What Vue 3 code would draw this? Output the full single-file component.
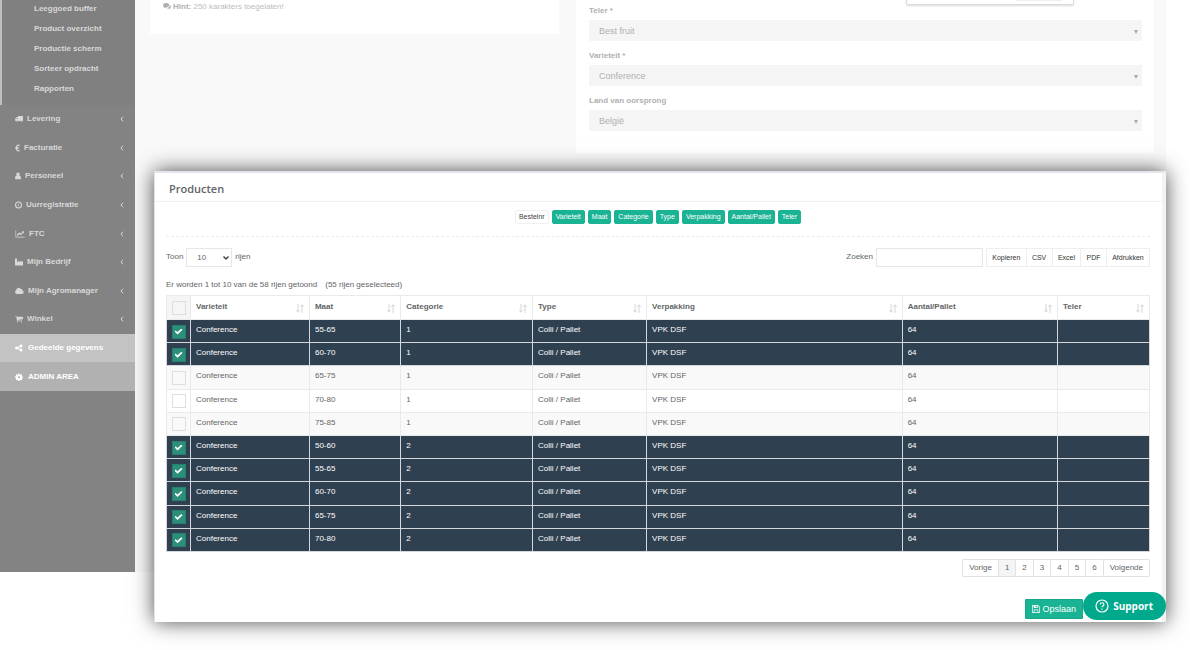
<script setup>
import { ref } from 'vue'

const subItems = ['Leeggoed buffer', 'Product overzicht', 'Productie scherm', 'Sorteer opdracht', 'Rapporten']

const menu = [
  { label: 'Levering', icon: 'truck', w: 8 },
  { label: 'Facturatie', icon: 'euro', w: 5 },
  { label: 'Personeel', icon: 'user', w: 6 },
  { label: 'Uurregistratie', icon: 'clock', w: 7 },
  { label: 'FTC', icon: 'chart', w: 10 },
  { label: 'Mijn Bedrijf', icon: 'industry', w: 8 },
  { label: 'Mijn Agromanager', icon: 'cloud', w: 9 },
  { label: 'Winkel', icon: 'cart', w: 8 },
  { label: 'Gedeelde gegevens', icon: 'share', w: 8, tone: 'shared' },
  { label: 'ADMIN AREA', icon: 'gear', w: 8, tone: 'admin' },
]

const icons = {
  truck: { box: '0 0 18 16', d: 'M7 1h11v11.500h-1.300a2.200 2.200 0 0 1-4.400 0H7.700a2.200 2.200 0 0 1-4.400 0H.500V7.500L3.500 3.500H7zM5.700 5.300H4.300L2.500 7.700h3.200zM5.500 11.200a1.300 1.300 0 1 0 .010 0zM14.500 11.200a1.300 1.300 0 1 0 .010 0z' },
  euro: { box: '0 0 10 16', d: 'M9.600 1.700l-.500 2.400C7.200 3.200 5 3.600 4.300 6h4l-.300 1.400H4v1.200h3.700L7.400 10H4.300c.700 2.400 2.900 2.900 4.900 1.900l.500 2.300C6 15.800 2.500 14.300 1.700 10H.300V8.600h1.200V7.400H.300V6h1.400C2.500 1.800 6.200.200 9.600 1.700z' },
  user: { box: '0 0 12 14', d: 'M6 0a3.300 3.300 0 0 1 2.300 5.800C10.800 6.200 12 8.500 12 11.500c0 1.200-.800 2.200-2 2.200H2c-1.200 0-2-1-2-2.200 0-3 1.200-5.300 3.700-5.700A3.300 3.300 0 0 1 6 0z' },
  clock: { box: '0 0 14 14', d: 'M7 0a7 7 0 1 1 0 14A7 7 0 0 1 7 0zm0 2.100a4.900 4.900 0 1 0 0 9.800 4.900 4.900 0 0 0 0-9.800zM6.500 3.800H8v4.400H4.500V6.900h2z' },
  chart: { box: '0 0 18 16', d: 'M0 1h1.300v12.700H18V15H0zM16.900 2.600v4.200l-1.300-1.200-5 5-2.500-2.500-3.800 3.800-1.800-1.800 5.600-5.600 2.500 2.500L14 3.900l-1.300-1.300z' },
  industry: { box: '0 0 16 16', d: 'M0 1h4v7.500L8.500 5v3.500L13 5v3.500L16 6v9H0z' },
  cloud: { box: '0 0 18 16', d: 'M4 14a4 4 0 0 1-1.700-7.500A4.800 4.800 0 0 1 11.300 4.200 2.800 2.800 0 0 1 14.800 7 3.600 3.600 0 0 1 14.300 14z' },
  cart: { box: '0 0 16 16', d: 'M0 2h3.100l.400 1.400H16v5.300L5.200 10l.200 1H14v1.200H4.200L2.300 3.200H0zM5.500 12.600a1.300 1.300 0 1 1-.010 0zM13 12.600a1.300 1.300 0 1 1-.010 0z' },
  share: { box: '0 0 16 16', d: 'M12 1.200a2.900 2.900 0 1 1-2 5L6.200 8l3.800 1.900a2.900 2.900 0 1 1-.900 2L5.400 10a3 3 0 1 1 0-4l3.700-1.900A2.900 2.900 0 0 1 12 1.200z' },
  gear: { box: '0 0 16 16', d: 'M6.700 1h2.600l.400 2 1.300.500L12.700 2.400l1.900 1.900L13.500 6l.500 1.200 2 .300v2.200l-2 .400-.500 1.200 1.100 1.700-1.900 1.800L11 13.700l-1.300.500-.400 1.800H6.700l-.400-1.900-1.300-.500-1.700 1.100-1.800-1.900L2.600 11 2 9.800 0 9.400V7.100l2-.400L2.600 5.500 1.500 4 3.300 2.200 5 3.400 6.300 3zM8 6.300a2.200 2.200 0 1 0 0 4.400 2.200 2.200 0 0 0 0-4.400z' },
}

const fields = [
  { id: 'teler', label: 'Teler *', value: 'Best fruit' },
  { id: 'varieteit', label: 'Varieteit *', value: 'Conference' },
  { id: 'land', label: 'Land van oorsprong', value: 'België' },
]

const toggles = ['Bestelnr', 'Varieteit', 'Maat', 'Categorie', 'Type', 'Verpakking', 'Aantal/Pallet', 'Teler']
const exportsList = ['Kopieren', 'CSV', 'Excel', 'PDF', 'Afdrukken']
const columns = ['Varieteit', 'Maat', 'Categorie', 'Type', 'Verpakking', 'Aantal/Pallet', 'Teler']
const pages = ['Vorige', '1', '2', '3', '4', '5', '6', 'Volgende']

const rows = ref(
  [
    ['55-65', 1, true], ['60-70', 1, true], ['65-75', 1, false], ['70-80', 1, false], ['75-85', 1, false],
    ['50-60', 2, true], ['55-65', 2, true], ['60-70', 2, true], ['65-75', 2, true], ['70-80', 2, true],
  ].map(([size, cat, selected]) => ({
    selected,
    cells: ['Conference', size, cat, 'Colli / Pallet', 'VPK DSF', '64', ''],
  }))
)
const allSelected = ref(false)
const search = ref('')
</script>

<template>
  <div class="page">
    <div class="backdrop">
      <nav class="sidebar">
        <div class="submenu">
          <a v-for="s in subItems" :key="s" href="#">{{ s }}</a>
        </div>
        <div class="menu">
          <a v-for="m in menu" :key="m.label" href="#" :class="m.tone">
            <svg :style="{ width: m.w + 'px' }" :viewBox="icons[m.icon].box" aria-hidden="true">
              <path :d="icons[m.icon].d" fill-rule="evenodd" />
            </svg>
            <span>{{ m.label }}</span>
            <svg v-if="!m.tone" class="caret" viewBox="0 0 4 6" aria-hidden="true"><path d="M3 .700L1 3l2 2.300" /></svg>
          </a>
        </div>
      </nav>
      <div class="content">
        <section class="card hint-card">
          <p>
            <svg viewBox="0 0 18 16" aria-hidden="true"><path d="M7 1.500c3.900 0 7 2.100 7 4.900s-3.100 4.800-7 4.800l-1.500-.100c-1.200 1-2.700 1.500-4.400 1.700.700-.800 1.300-1.500 1.500-2.600C1 9.300 0 7.900 0 6.400 0 3.600 3.100 1.500 7 1.500zM15.200 5.500c1.700.900 2.800 2.200 2.800 3.800 0 1.500-1 2.800-2.500 3.700.200.900.700 1.500 1.400 2.300-1.600-.200-3-.700-4.200-1.700-1.900.300-3.900 0-5.500-.900 4.800-.100 8.900-2.900 8-7.200z" /></svg>
            <b>Hint:</b> 250 karakters toegelaten!
          </p>
        </section>
        <section class="card form-card">
          <div v-for="f in fields" :key="f.id" class="field">
            <label :for="f.id">{{ f.label }}</label>
            <div class="select-wrap">
              <select :id="f.id" disabled><option>{{ f.value }}</option></select>
              <svg viewBox="0 0 4 4" aria-hidden="true"><path d="M0 0h4L2 4z" /></svg>
            </div>
          </div>
          <div class="popup"><i></i></div>
        </section>
      </div>
    </div>

    <section class="panel">
      <h5>Producten</h5>
      <div class="body">
        <div class="toggles">
          <button v-for="(t, i) in toggles" :key="t" type="button" :class="{ off: i === 0 }">{{ t }}</button>
        </div>
        <div class="toolbar">
          <label for="len">Toon</label>
          <div class="length">
            <select id="len"><option>10</option></select>
            <svg viewBox="0 0 8 6" aria-hidden="true"><path d="M1.500 1.500L4 4l2.500-2.500" /></svg>
          </div>
          <span>rijen</span>
          <label class="search-label" for="search">Zoeken</label>
          <input id="search" v-model="search" type="text">
          <div class="exports">
            <button v-for="e in exportsList" :key="e" type="button">{{ e }}</button>
          </div>
        </div>
        <p class="info"><span>Er worden 1 tot 10 van de 58 rijen getoond</span><span>(55 rijen geselecteed)</span></p>
        <table>
          <colgroup>
            <col class="c-check"><col class="c-var"><col class="c-size"><col class="c-cat">
            <col class="c-type"><col class="c-pack"><col class="c-count"><col>
          </colgroup>
          <thead>
            <tr>
              <th class="check"><input v-model="allSelected" type="checkbox" aria-label="Alles selecteren"></th>
              <th v-for="c in columns" :key="c">
                <div class="head">
                  <span>{{ c }}</span>
                  <svg viewBox="0 0 8 9" aria-hidden="true"><path d="M2 0v8M.300 6.200L2 8.200l1.700-2M6 9V1M4.300 2.800L6 .800l1.700 2" /></svg>
                </div>
              </th>
            </tr>
          </thead>
          <tbody>
            <tr v-for="(r, i) in rows" :key="i" :class="{ selected: r.selected }">
              <td class="check"><input v-model="r.selected" type="checkbox" :aria-label="'Rij ' + (i + 1)"></td>
              <td v-for="(c, j) in r.cells" :key="j">{{ c }}</td>
            </tr>
          </tbody>
        </table>
        <div class="pagination">
          <a v-for="p in pages" :key="p" href="#" :class="{ active: p === '1' }">{{ p }}</a>
        </div>
        <div class="actions">
          <button type="button" class="save">
            <svg viewBox="0 0 14 14" aria-hidden="true"><path fill-rule="evenodd" d="M1 0h9.500L14 3.500V13l-1 1H1l-1-1V1zM1.200 1.200v11.600H3V8h8v4.800h1.800V4L10.200 1.200H10v4H3v-4zM6.500 1.200V4h2V1.200zM4.200 9.200v3.600h5.600V9.200z" /></svg>
            <span>Opslaan</span>
          </button>
        </div>
      </div>
      <button type="button" class="support">
        <svg viewBox="0 0 14 14" aria-hidden="true"><circle cx="7" cy="7" r="6" /><path d="M5.200 5.600c0-2.500 3.700-2.400 3.700-.100C8.900 6.900 7 6.900 7 8.300M7 9.500v1.200" /></svg>
        <span>Support</span>
      </button>
    </section>
  </div>
</template>

<style>
body { background: #fff; }
</style>

<style scoped>
.page {
  display: grid;
  grid-template-columns: minmax(0, 1fr);
  overflow: hidden;
  min-height: 100vh;
  font: 8px/10px "Liberation Sans", Arial, sans-serif;
  color: #626567;
}
.page *, .page *::before { box-sizing: border-box; }
button, input, select { font: inherit; color: inherit; margin: 0; }
a { text-decoration: none; color: inherit; }
p, h5 { margin: 0; }
.backdrop, .panel { grid-area: 1 / 1; }
.backdrop {
  display: flex;
  align-self: start;
  min-height: 88vh;
  margin-right: 24px;
  background: #f9f9f9;
}
.sidebar {
  flex: 0 0 135px;
  position: relative;
  z-index: 2;
  background: #838383;
  color: #d8d8d8;
  font-weight: 700;
}
.submenu {
  display: grid;
  grid-auto-rows: 20px;
  align-items: center;
  padding: 0 0 6px 32px;
  margin-top: -1px;
  border-left: 2px solid #bfbfbf;
  background: #808080;
}
.menu { display: grid; grid-auto-rows: 1fr; height: 286px; }
.menu a { display: flex; align-items: center; gap: 4px; padding: 0 11px 0 15px; }
.menu svg { height: 8px; fill: currentColor; }
.menu .caret { width: 4px; height: 6px; margin-left: auto; fill: none; stroke: currentColor; }
.menu .shared { background: #c3c3c3; color: #fff; }
.menu .admin { background: #b1b1b1; color: #fff; }
.menu .shared, .menu .admin { gap: 5px; }
.content {
  flex: 1;
  display: grid;
  grid-template-columns: 409fr 578fr;
  gap: 17px;
  align-items: start;
  padding: 0 12px 0 15px;
}
.card { background: #fff; }
.hint-card { padding: 2px 13px 22px; color: #bcbcbc; }
.hint-card p { white-space: nowrap; }
.hint-card b { color: #b0b0b0; }
.hint-card svg { width: 8px; height: 8px; margin-right: 2px; fill: #b0b0b0; vertical-align: -1px; }
.form-card { position: relative; padding: 6px 12px 22px 13px; }
.field { display: grid; gap: 4px; margin-bottom: 10px; }
.field:nth-child(3) { margin-bottom: 0; }
.field label { font-weight: 700; color: #b0b0b0; }
.select-wrap, .length { position: relative; display: flex; }
.select-wrap select {
  appearance: none;
  width: 100%;
  height: 21px;
  padding: 0 10px;
  border: 0;
  background: #f5f5f5;
  color: #b0b0b0;
  font-size: 9px;
  opacity: 1;
}
.select-wrap svg { position: absolute; right: 4px; top: 10px; width: 4px; height: 4px; fill: #a8a8a8; }
.popup {
  position: absolute;
  top: -10px;
  right: 80px;
  width: 168px;
  height: 15px;
  border: 1px solid #dcdcdc;
  border-radius: 2px;
  background: #fff;
  box-shadow: 0 1px 2px rgba(0, 0, 0, .15);
}
.popup i { display: block; width: 46px; height: 10px; margin-left: auto; margin-right: 11px; background: #efefef; }

.panel {
  position: relative;
  align-self: start;
  margin: 171px 24px 28px 154px;
  border-top: 2px solid #e2e6ea;
  border-left: 1px solid #dfe3ef;
  border-right: 4px solid #f3f3f4;
  background: #fff;
  box-shadow: 0 0 20px rgba(0, 0, 0, .7);
}
h5 {
  padding: 9px 14px 5px;
  border-bottom: 1px solid #eef0f1;
  font: 600 11px/14px "Open Sans", sans-serif;
}
.body { padding: 8px 12px 3px 11px; }
.toggles {
  display: flex;
  justify-content: center;
  gap: 3px;
  padding-bottom: 12px;
  border-bottom: 1px dashed #eaecee;
}
.toggles button {
  height: 14px;
  padding: 0 3px;
  border: 1px solid #1ab394;
  border-radius: 2px;
  background: #1ab394;
  color: #fff;
  font-size: 7px;
  line-height: 10px;
}
.toggles .off { border-color: #f0f0f0; background: #fff; color: #444; }
.toolbar { display: flex; align-items: center; gap: 3px; margin-top: 11px; }
.toolbar > label, .toolbar > span { padding-bottom: 2px; }
.length select {
  appearance: none;
  width: 46px;
  height: 19px;
  padding: 0 10px;
  border: 1px solid #e5e6e7;
  border-radius: 0;
  background: #fff;
}
.length svg { position: absolute; right: 2px; top: 7px; width: 8px; height: 6px; fill: none; stroke: #444; stroke-width: 1.500; }
.search-label { margin-left: auto; }
#search { width: 107px; height: 19px; border: 1px solid #e5e6e7; background: #fff; }
.exports { display: flex; width: 164px; }
.exports button {
  flex: 1 0 auto;
  height: 19px;
  padding: 0 5px;
  border: 1px solid #eceeef;
  border-right-width: 0;
  background: #fff;
  color: #333;
  font-size: 7px;
}
.exports button:last-child { border-right-width: 1px; }
.info { display: flex; gap: 8px; margin: 13px 0 5px; }
table { width: 100%; height: 257px; table-layout: fixed; border-collapse: collapse; }
.c-check { width: 24px; }
.c-var { width: 12.100%; }
.c-size { width: 9.300%; }
.c-cat { width: 13.400%; }
.c-type { width: 11.600%; }
.c-pack { width: 26%; }
.c-count { width: 15.800%; }
th, td { padding: 0 5px 2px; border: 1px solid #e9eaeb; text-align: left; vertical-align: middle; }
thead tr { height: 24px; }
th { font-weight: 700; }
.check { padding: 1px 0 0; text-align: center; }
th.check { background: #f5f5f6; }
.check input {
  appearance: none;
  display: block;
  width: 14px;
  height: 14px;
  margin: 0 auto;
  border: 1px solid #dededb;
  background: transparent;
}
.check input:checked { border-color: #27806f; background: #2b8f79; }
.check input:checked::before {
  content: "";
  display: block;
  width: 8px;
  height: 6px;
  margin: 3px 2px;
  background: #fff;
  clip-path: polygon(0 50%, 13% 30%, 38% 58%, 85% 0, 100% 20%, 38% 100%);
}
.head { display: flex; justify-content: space-between; align-items: flex-start; height: 10px; }
.head svg { width: 8px; height: 9px; margin-top: 2px; fill: none; stroke: #d2d4d5; }
tbody tr:nth-child(odd) { background: #f9f9f9; }
tbody tr.selected { background: #2f4050; color: #fff; }
.selected td { border-color: #d4d8dc; }
.pagination { display: flex; justify-content: flex-end; margin-top: 7px; }
.pagination a { padding: 3px 6px; border: 1px solid #e2e2e2; border-right-width: 0; }
.pagination a:first-child { border-radius: 2px 0 0 2px; }
.pagination a:last-child { border-right-width: 1px; border-radius: 0 2px 2px 0; }
.pagination .active { background: #f4f4f4; }
.actions { display: flex; justify-content: flex-end; padding: 22px 67px 0 0; }
.save {
  display: flex;
  align-items: center;
  gap: 2px;
  height: 20px;
  padding: 0 6px;
  border: 1px solid #18a689;
  border-radius: 1px;
  background: #1ab394;
  color: #fff;
  font-size: 9px;
}
.save svg { width: 8px; height: 8px; fill: currentColor; }
.support {
  position: absolute;
  right: -4px;
  bottom: 2px;
  display: flex;
  align-items: center;
  gap: 4px;
  height: 28px;
  padding: 0 13px 0 12px;
  border: 0;
  border-radius: 14px;
  background: #00a88c;
  color: #fff;
  font: 700 10px/14px "Open Sans", sans-serif;
}
.support svg { width: 14px; height: 14px; fill: none; stroke: currentColor; stroke-width: 1.200; }
</style>
